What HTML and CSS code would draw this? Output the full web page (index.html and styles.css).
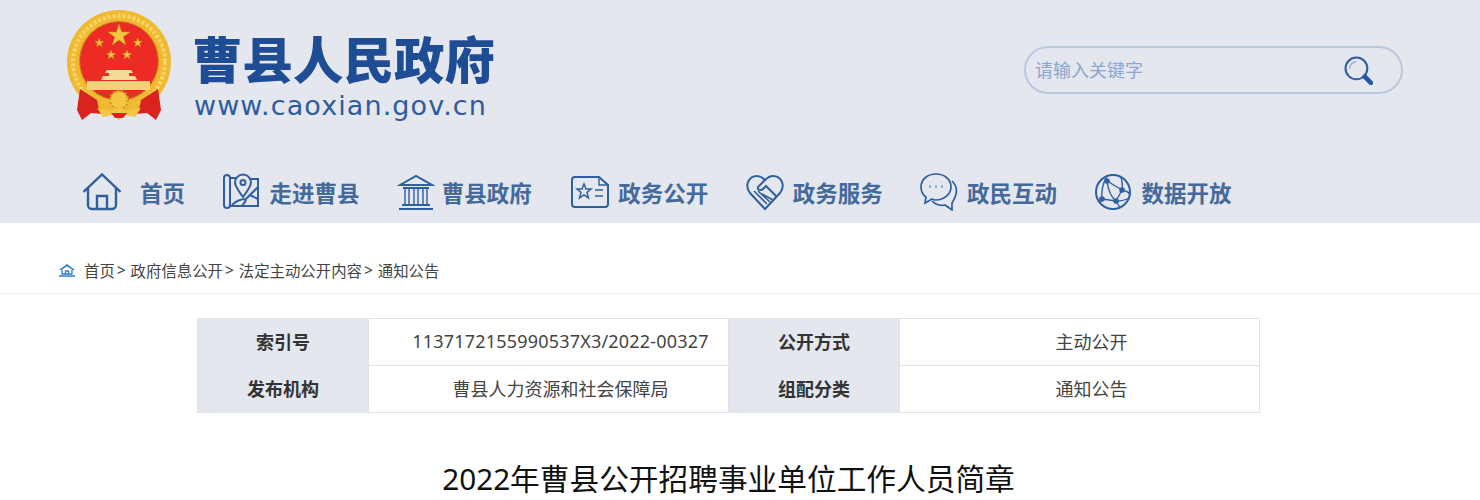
FILE: index.html
```html
<!DOCTYPE html>
<html lang="zh-CN">
  <head>
    <meta charset="UTF-8" />
    <title>2022年曹县公开招聘事业单位工作人员简章</title>
    <link rel="stylesheet" href="styles.css">
  </head>
  <body>
    <header class="header">
      <div class="header-top">
        <!-- emblem -->
        <svg class="emblem" viewBox="0 0 104 112">
          <circle cx="52" cy="52" r="52" fill="#f0b932" />
          <circle cx="52" cy="52" r="46" fill="none" stroke="#f9d568" stroke-width="4" stroke-dasharray="3 2" />
          <circle cx="52" cy="51" r="39.5" fill="#ec2b24" stroke="#c98a1c" stroke-width="1" />
          <g fill="#f5c63f" stroke="#c98a1c" stroke-width="0.5">
            <polygon points="52,14 54.6,22 63,22 56.2,27 58.8,35 52,30 45.2,35 47.8,27 41,22 49.4,22" />
            <polygon points="32.3,28 33.4,31.3 36.9,31.3 34.1,33.4 35.2,36.8 32.3,34.7 29.4,36.8 30.5,33.4 27.7,31.3 31.2,31.3" />
            <polygon points="70.7,28 71.8,31.3 75.3,31.3 72.5,33.4 73.6,36.8 70.7,34.7 67.8,36.8 68.9,33.4 66.1,31.3 69.6,31.3" />
            <polygon points="44,40 45.1,43.3 48.6,43.3 45.8,45.4 46.9,48.8 44,46.7 41.1,48.8 42.2,45.4 39.4,43.3 42.9,43.3" />
            <polygon points="60,40 61.1,43.3 64.6,43.3 61.8,45.4 62.9,48.8 60,46.7 57.1,48.8 58.2,45.4 55.4,43.3 58.9,43.3" />
          </g>
          <path d="M40 60 H64 L66 63 H62 V66 H68 L70 70 H34 L36 66 H42 V63 H38 Z" fill="#f5dc96" />
          <rect x="20" y="71" width="63" height="9" fill="#f4d27a" />
          <path d="M13 79 L30 90 L36 104 L24 103 L15 110 L10 100 Z" fill="#d9231d" />
          <path d="M91 79 L74 90 L68 104 L80 103 L89 110 L94 100 Z" fill="#d9231d" />
          <path d="M30 91 C38 96 66 96 74 91 L72 99 C64 103 40 103 32 99 Z" fill="#f0b932" />
          <circle cx="52" cy="90" r="9" fill="#f5c63f" stroke="#d99a22" stroke-width="2.5" stroke-dasharray="2 2" />
          <path d="M30 98 L44 101 L52 97 L60 101 L74 98 L68 107 L58 105 L52 110 L46 105 L36 107 Z" fill="#f5c63f" />
          <path d="M44 103 H60 L56 108 H48 Z" fill="#d9231d" />
        </svg>
        <div class="brand">
          <div class="brand-name">曹县人民政府</div>
          <div class="brand-url">www.caoxian.gov.cn</div>
        </div>
        <div class="search">
          <span class="search-text">请输入关键字</span>
          <svg class="search-icon" viewBox="0 0 28 28">
            <circle cx="12" cy="12" r="10.5" fill="none" stroke="#2f5f9f" stroke-width="2" />
            <path d="M5.5 12 A6.5 6.5 0 0 1 12 5.5" fill="none" stroke="#9db4d3" stroke-width="1.5" />
            <path d="M20 20 L26 26" stroke="#2557a0" stroke-width="4.5" stroke-linecap="round" />
          </svg>
        </div>
      </div>

      <nav class="nav">
        <a class="nav-item nav-home">
          <svg class="nav-icon" viewBox="0 0 38 38">
            <path d="M0.5 19 L19 1.5 L37.5 19" stroke-width="2.4" />
            <path d="M5 15 V32 a4 4 0 0 0 4 4 H29 a4 4 0 0 0 4 -4 V15" stroke-width="2.4" />
            <path d="M14 36 V23 H24 V36" stroke-width="2.4" />
          </svg>
          首页
        </a>
        <a class="nav-item">
          <svg class="nav-icon" viewBox="0 0 38 38">
            <path d="M2 5 a3 3 0 0 1 6 0 V32 a3 3 0 0 1 -6 0 Z" />
            <path d="M8 5 H14 M27 6 H36 V33 H8" />
            <path d="M21 24 C15 16 13 13 13 9.5 a8 8 0 0 1 16 0 C29 13 27 16 21 24 Z" />
            <circle cx="21" cy="9.5" r="2.5" />
            <path d="M10 32 C14 28 18 26 24 26 L36 14 M24 26 C24 29 21 31 20 33 M28 22 L36 26" />
          </svg>
          走进曹县
        </a>
        <a class="nav-item nav-gov">
          <svg class="nav-icon" viewBox="0 0 38 38">
            <path d="M3 12 L19 3 L35 12 Z" />
            <path d="M6 15 H32 M5 32 H33 M2 36 H36" />
            <path d="M8 15 V32 M12 15 V32 M17 15 V32 M21 15 V32 M26 15 V32 M30 15 V32" stroke-width="1.4" />
          </svg>
          曹县政府
        </a>
        <a class="nav-item">
          <svg class="nav-icon" viewBox="0 0 38 38">
            <path d="M4 4 H28 L37 12 V31 a3 3 0 0 1 -3 3 H4 a3 3 0 0 1 -3 -3 V7 a3 3 0 0 1 3 -3 Z" />
            <path d="M28 4 V12 H37" stroke-width="1.4" />
            <polygon points="13,11 15,16 20,16 16,19.5 17.5,25 13,22 8.5,25 10,19.5 6,16 11,16" stroke-width="1.5" />
            <path d="M24 17 H32 M24 23 H32" stroke-width="1.6" />
          </svg>
          政务公开
        </a>
        <a class="nav-item">
          <svg class="nav-icon" viewBox="0 0 38 38">
            <path d="M19 36 L4 20 C-2 12 3 3 11 3 C14 3 17 5 19 7 C21 5 24 3 27 3 C35 3 40 12 34 20 Z" />
            <path d="M19 7 L12 14 C11 17 15 18 17 16 L20 13 L31 24" />
            <path d="M8 18 L21 31 M12 18 L24 29 M16 21 L27 27" stroke-width="1.6" />
          </svg>
          政务服务
        </a>
        <a class="nav-item">
          <svg class="nav-icon" viewBox="0 0 38 38">
            <path d="M16 1 C8 1 1 6 1 14 C1 19 3 22 6 24 L5 30 L12 26 C13 27 15 27 16 27 C24 27 31 21 31 14 C31 6 24 1 16 1 Z" stroke-width="1.7" />
            <path d="M32 8 C36 12 37 17 36 21 C35 26 33 28 32 30 L32 37 L25 32 C20 33 15 31 12 28" stroke-width="1.7" />
            <path d="M9.5 13.5 H10.5 M15.5 13.5 H16.5 M21.5 13.5 H22.5" stroke-width="2.4" />
          </svg>
          政民互动
        </a>
        <a class="nav-item">
          <svg class="nav-icon" viewBox="0 0 38 38">
            <circle cx="19" cy="19" r="17" />
            <path d="M13 3 C9 10 7 18 8 27 M13 8 L28 17 L22 28 L8 26 M13 8 C14 16 17 24 22 28 L26 35 M28 17 C33 18 35 19 36 22 M8 27 C6 28 5 29 5 30 M28 17 C29 12 28 8 27 4 M22 28 C27 28 32 27 35 25" stroke-width="1.4" />
            <circle class="nav-dot" cx="13" cy="8" r="1.8" />
            <circle class="nav-dot" cx="28" cy="17" r="1.8" />
            <circle class="nav-dot" cx="22" cy="28" r="1.8" />
            <circle class="nav-dot" cx="8" cy="26" r="1.8" />
          </svg>
          数据开放
        </a>
      </nav>
    </header>

    <div class="crumbs">
      <svg class="crumbs-icon" viewBox="0 0 18 14">
        <path d="M1 7 L9 1 L17 7 H14.5 L9 3.2 L3.5 7 Z" fill="#2b7fc9" />
        <path d="M4 7 V11 H14 V7 M7.5 11 V8 H10.5 V11 M1 13 H17" fill="none" stroke="#2b7fc9" stroke-width="1.3" />
      </svg>
      <a>首页</a><span class="crumbs-sep">&gt;</span>
      <a>政府信息公开</a><span class="crumbs-sep">&gt;</span>
      <a>法定主动公开内容</a><span class="crumbs-sep">&gt;</span>
      <a>通知公告</a>
    </div>

    <table class="info">
      <tr>
        <th>索引号</th>
        <td class="info-code">1137172155990537X3/2022-00327</td>
        <th>公开方式</th>
        <td>主动公开</td>
      </tr>
      <tr>
        <th>发布机构</th>
        <td>曹县人力资源和社会保障局</td>
        <th>组配分类</th>
        <td>通知公告</td>
      </tr>
    </table>

    <h1 class="title">2022年曹县公开招聘事业单位工作人员简章</h1>
  </body>
</html>
```

FILE: styles.css
```css
body {
  margin: 0;
  height: 500px;
  overflow: hidden;
  background-color: #fff;
  font-family: "Noto Sans", "Noto Sans CJK SC", sans-serif;
  color: #333;
}
.header {
  height: 223px;
  background-color: #e4e7ed;
}
.header-top {
  display: flex;
  align-items: flex-start;
  height: 165px;
  padding: 10px 77px 0 67px;
  box-sizing: border-box;
}
.emblem {
  width: 104px;
  height: 112px;
  flex-shrink: 0;
}
.brand {
  margin-left: 21px;
  padding-top: 25px;
}
.brand-name {
  font-size: 50.5px;
  line-height: 50px;
  font-weight: 900;
  color: #1f4d95;
  white-space: nowrap;
}
.brand-url {
  margin: 5px 0 0 2px;
  font-family: "DejaVu Sans", sans-serif;
  font-size: 27px;
  line-height: 32px;
  letter-spacing: 1.1px;
  color: #2d5c9e;
}
.search {
  display: flex;
  align-items: center;
  justify-content: space-between;
  width: 379px;
  height: 48px;
  margin: 36px 0 0 auto;
  padding: 0 28px 0 9px;
  box-sizing: border-box;
  border: 2px solid #b9c8df;
  border-radius: 24px;
}
.search-text {
  padding-bottom: 2px;
  font-size: 18px;
  color: #8ba6cf;
}
.search-icon {
  width: 29px;
  height: 29px;
}
.nav {
  display: flex;
  align-items: center;
  gap: 37.4px;
  height: 54px;
  padding-left: 83px;
}
.nav-item {
  display: flex;
  align-items: center;
  gap: 9px;
  font-size: 22.5px;
  font-weight: 700;
  color: #44699b;
  white-space: nowrap;
}
.nav-home {
  gap: 19px;
}
.nav-gov {
  gap: 7px;
  padding-right: 2px;
}
.nav-icon {
  width: 38px;
  height: 38px;
  fill: none;
  stroke: #2f5f9f;
  stroke-width: 2;
  flex-shrink: 0;
}
.nav-dot {
  fill: #2f5f9f;
}
.crumbs {
  display: flex;
  align-items: center;
  height: 71px;
  padding: 24px 0 0 58px;
  box-sizing: border-box;
  border-bottom: 1px solid #eee;
  font-size: 15.4px;
  color: #444;
}
.crumbs-icon {
  width: 18px;
  height: 14px;
  margin-right: 8px;
}
.crumbs-sep {
  margin: 0 5px 0 2px;
}
.info {
  width: 1063px;
  margin: 24px 0 0 197px;
  border-collapse: collapse;
  table-layout: fixed;
  font-size: 18px;
}
.info th,
.info td {
  height: 44px;
  padding: 0 0 2px;
  border: 1px solid #e2e3e6;
  text-align: center;
  font-weight: 400;
  color: #444;
}
.info td {
  padding-left: 24px;
}
.info th {
  width: 170px;
  background-color: #e4e7ed;
  font-weight: 700;
  color: #333;
}
.info-code {
  white-space: nowrap;
  letter-spacing: 0.2px;
}
.title {
  margin: 43px 23px 0 0;
  text-align: center;
  font-size: 29.7px;
  line-height: 46px;
  font-weight: 400;
  color: #111;
}
```
